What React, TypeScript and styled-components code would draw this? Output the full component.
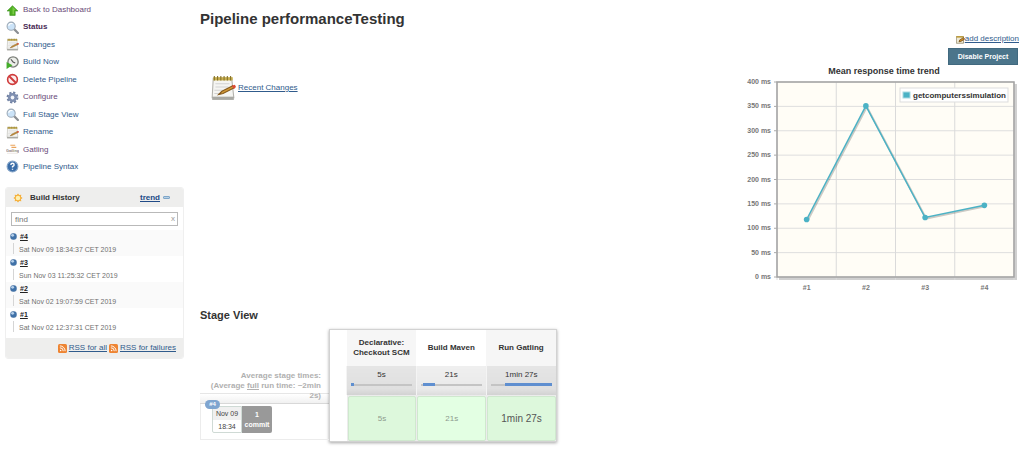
import React from "react";
import styled, { createGlobalStyle, css } from "styled-components";

const GlobalStyle = createGlobalStyle`
  * { box-sizing: border-box; }
  body {
    margin: 0;
    background: #fff;
    color: #333;
    font-family: "Liberation Sans", Arial, sans-serif;
    font-size: 8px;
    line-height: 10px;
  }
  button, input { font-family: inherit; }
  svg { display: block; flex: none; }
`;

const Page = styled.div`
  display: flex;
  align-items: flex-start;
`;

const Sidebar = styled.aside`
  flex: none;
  width: 184px;
  padding: 2px 0 0 5px;
`;

const Tasks = styled.nav`
  display: flex;
  flex-direction: column;
  justify-content: space-between;
  height: 173px;
`;

const TaskLink = styled.a<{ $visited?: boolean; $active?: boolean }>`
  display: flex;
  align-items: center;
  gap: 4px;
  height: 16px;
  padding-left: 1px;
  color: ${(p) => (p.$active ? "#4a2a55" : p.$visited ? "#694a78" : "#305b8c")};
  font-weight: ${(p) => (p.$active ? 700 : 400)};
  text-decoration: none;
`;

const History = styled.section`
  margin-top: 12px;
  border: 1px solid #efefef;
  border-radius: 3px;
  overflow: hidden;
`;

const HistoryHeader = styled.header`
  display: flex;
  align-items: center;
  height: 19px;
  padding: 0 13px 0 7px;
  background: #eeeeed;
`;

const HistoryTitle = styled.h2`
  flex: 1;
  margin: 0 0 0 7px;
  font-size: 8px;
  line-height: 10px;
`;

const TrendLink = styled.a`
  color: #204a87;
  font-weight: 700;
`;

const TrendDash = styled.span`
  width: 7px;
  height: 3px;
  margin-left: 3px;
  border: 1px solid #7ea6c9;
  border-radius: 1px;
  background: #b8d0e4;
`;

const SearchBox = styled.div`
  display: flex;
  align-items: center;
  height: 14px;
  margin: 5px 5px 4px;
  border: 1px solid #b9b9b9;
`;

const SearchInput = styled.input`
  flex: 1;
  min-width: 0;
  padding: 0 3px;
  border: 0;
  outline: 0;
  background: none;
  font-size: 8px;
  &::placeholder { color: #757575; }
`;

const ClearButton = styled.button`
  padding: 0 2px;
  border: 0;
  background: none;
  color: #999;
  font-size: 8px;
  line-height: 10px;
`;

const BuildList = styled.ol`
  margin: 0 0 4px;
  padding: 0;
  list-style: none;
`;

const BuildItem = styled.li`
  display: grid;
  grid-template-columns: 7px 1fr;
  grid-template-rows: 13px 13px;
  align-items: center;
  padding-left: 4px;
  &:nth-child(odd) { background: #fafafa; }
`;

const BuildNumber = styled.a`
  justify-self: start;
  margin-left: 3px;
  color: #222;
  font-size: 7px;
  font-weight: 700;
`;

const BuildStem = styled.span`
  justify-self: center;
  align-self: start;
  width: 1px;
  height: 11px;
  background: #d5d5d5;
`;

const BuildDate = styled.span`
  padding-left: 2px;
  color: #707070;
  font-size: 7px;
`;

const FeedBar = styled.footer`
  display: flex;
  align-items: center;
  justify-content: flex-end;
  gap: 2px;
  height: 20px;
  padding-right: 7px;
  background: #eeeeed;
`;

const TextLink = styled.a`
  color: #305b8c;
`;

const Main = styled.main`
  flex: 1;
  min-width: 0;
  padding: 9px 5px 8px 16px;
`;

const PageTitle = styled.h1`
  margin: 0 0 5px;
  font-size: 15px;
  line-height: 20px;
`;

const Overview = styled.div`
  display: flex;
  justify-content: space-between;
`;

const RecentChanges = styled.div`
  display: flex;
  align-items: center;
  align-self: flex-start;
  gap: 2px;
  padding: 41px 0 0 10px;
`;

const ProjectAside = styled.div`
  display: flex;
  flex-direction: column;
  align-items: flex-end;
`;

const DescriptionLink = styled.a`
  display: flex;
  align-items: center;
  height: 10px;
  color: #305b8c;
`;

const DisableButton = styled.button`
  width: 70px;
  height: 17px;
  margin: 4px 1px 0 0;
  padding: 0;
  border: 1px solid #41697f;
  background: #4b758b;
  color: #fff;
  font-size: 7px;
  font-weight: 700;
`;

const SectionTitle = styled.h2`
  margin: 13px 0 6px;
  font-size: 11px;
  line-height: 15px;
`;

const StageView = styled.div`
  display: flex;
  align-items: flex-start;
`;

const RunColumn = styled.div`
  width: 129px;
`;

const AverageLabel = styled.p`
  margin: 0;
  padding: 42px 8px 2px;
  border-bottom: 1px solid #d8d8d8;
  background: linear-gradient(#e6e6e6, #e6e6e6 1px, #fff 1px, #f1f1f1) bottom / 100% 10px no-repeat;
  color: #b0b0b0;
  font-weight: 700;
  text-align: right;
`;

const RunRow = styled.div`
  position: relative;
  display: flex;
  height: 36px;
  padding: 2px 0 6px 11px;
  border: solid #ececec;
  border-width: 0 0 1px 1px;
`;

const RunBadge = styled.a`
  position: absolute;
  top: -4px;
  left: 4px;
  width: 15px;
  border-radius: 5px;
  background: #7fa5d0;
  color: #fff;
  font-size: 6px;
  font-weight: 700;
  line-height: 9px;
  text-align: center;
  text-decoration: none;
`;

const runBlock = css`
  display: flex;
  flex-direction: column;
  width: 30px;
  text-align: center;
  font-size: 7px;
`;

const RunTime = styled.div`
  ${runBlock}
  border: 1px solid #cfdad5;
  border-radius: 2px 0 0 2px;
  color: #444;
  line-height: 13px;
`;

const RunDate = styled.span`
  background: #f0f0f0;
`;

const Commits = styled.div`
  ${runBlock}
  justify-content: center;
  border-radius: 0 2px 2px 0;
  background: #999;
  color: #fff;
  font-weight: 700;
`;

const StageCard = styled.div`
  padding-left: 16px;
  border: 1px solid #d2d2d2;
  box-shadow: 0 1px 3px rgba(0, 0, 0, 0.35);
  background: #fff;
`;

const StageTable = styled.table`
  border-collapse: collapse;
  table-layout: fixed;
  width: 210px;
`;

const StageHead = styled.th`
  height: 36px;
  padding: 0;
  font-size: 8px;
  &:nth-child(odd) { background: #f6f6f6; }
`;

const AverageCell = styled.td`
  height: 29px;
  padding: 4px 4px 0;
  border-left: 1px solid #f4f4f4;
  background: linear-gradient(#efefef, #e9e9e9 80%, #dcdcdc);
  vertical-align: top;
  text-align: center;
  &:nth-child(odd) { background: linear-gradient(#e5e5e5, #dfdfdf 80%, #d2d2d2); }
`;

const Track = styled.div`
  display: flex;
  align-items: center;
  width: 61px;
  height: 3px;
  margin-top: 3px;
  background: linear-gradient(#c4c4c4, #c4c4c4) center / 100% 2px no-repeat;
`;

const Fill = styled.span<{ $from: number; $size: number }>`
  width: ${(p) => p.$size}%;
  height: 3px;
  margin-left: ${(p) => p.$from}%;
  background: #5f8fd0;
`;

const ResultCell = styled.td<{ $slow?: boolean }>`
  height: 46px;
  padding: 1px 0 0 1px;
  color: ${(p) => (p.$slow ? "#555" : "#8d9a8d")};
  font-size: ${(p) => (p.$slow ? 10 : 8)}px;
  background: #ececec;
`;

const Result = styled.div<{ $light?: boolean }>`
  display: flex;
  align-items: center;
  justify-content: center;
  height: 45px;
  border: 1px solid #cfe8ce;
  border-radius: 2px;
  background: ${(p) => (p.$light ? "#e3ffe3" : "#ddf8dc")};
`;

const Icon = ({ size = 13, children }: { size?: number; children: React.ReactNode }) => (
  <svg width={size} height={size} viewBox="0 0 24 24" aria-hidden="true">
    {children}
  </svg>
);

const UpIcon = () => (
  <Icon>
    <path d="M12 3 22 13H17V21H7V13H2Z" fill="#4fae22" stroke="#2f8712" strokeWidth="1" />
    <path d="M12 5 18 11H15V19H12Z" fill="#78cb45" />
  </Icon>
);

const SearchIcon = () => (
  <Icon>
    <path d="M15 15 22 22" stroke="#8b8f94" strokeWidth="4" strokeLinecap="round" />
    <circle cx="9.500" cy="9.500" r="7.500" fill="#cbe3f8" stroke="#9fabb7" strokeWidth="2" />
    <path d="M5 9A5 5 0 0 1 12 5" stroke="#fff" strokeWidth="2" fill="none" />
  </Icon>
);

const NotepadIcon = ({ size = 13 }: { size?: number }) => (
  <Icon size={size}>
    <path d="M3 3H20L22 21H2Z" fill="#f5f5f2" stroke="#b3b2ac" strokeWidth="1" />
    <path d="M2 20H22V23H2Z" fill="#a9a9a4" />
    <path d="M3 2H21V5H3Z" fill="#c9b04f" />
    <path d="M4 1V5M7 1V5M10 1V5M13 1V5M16 1V5M19 1V5" stroke="#85712c" strokeWidth="1" />
    <path d="M5 8H18M5 11H17M4 14H12M4 17H9" stroke="#d2d2d2" strokeWidth="1" />
    <path d="M8 18 11 15 21 10 22 12 12 17Z" fill="#d39a36" stroke="#85591c" strokeWidth="1" />
    <path d="M20 10 23 9 24 11 22 13Z" fill="#dc4a34" />
  </Icon>
);

const ClockIcon = () => (
  <Icon>
    <circle cx="13" cy="11" r="9.500" fill="#eceee9" stroke="#7b7f79" strokeWidth="2.500" />
    <path d="M9 6 13 11 17 13" stroke="#555" strokeWidth="2" fill="none" />
    <path d="M1 11 12 17 1 24Z" fill="#43ad2a" />
  </Icon>
);

const StopIcon = () => (
  <Icon>
    <circle cx="12" cy="12" r="9" fill="#fbeeee" stroke="#cf3a3a" strokeWidth="3" />
    <path d="M6 6 18 18" stroke="#cf3a3a" strokeWidth="3.500" />
  </Icon>
);

const GearIcon = () => (
  <Icon>
    <circle cx="12" cy="12" r="9" fill="none" stroke="#7182a3" strokeWidth="4" strokeDasharray="4 3.069" />
    <circle cx="12" cy="12" r="6" fill="#dfe5f0" stroke="#7f8fb0" strokeWidth="5" />
    <circle cx="12" cy="12" r="3" fill="#f4f6fa" />
  </Icon>
);

const GatlingIcon = () => (
  <Icon>
    <path d="M8 3H17V5H8ZM10 7H19V9H10Z" fill="#eba55c" />
    <text x="12" y="17" textAnchor="middle" fontSize="7" fontWeight="700" fill="#8a7f78">
      Gatling
    </text>
    <path d="M2 19H22" stroke="#ddd5cc" strokeWidth="1" />
  </Icon>
);

const HelpIcon = () => (
  <Icon>
    <circle cx="12" cy="12" r="10" fill="#3a6da8" stroke="#86a5c8" strokeWidth="2" />
    <path d="M9 9Q9 6 12 6T15 9Q15 11 12 12V14M12 16V18" stroke="#fff" strokeWidth="2.500" fill="none" />
  </Icon>
);

const SunIcon = () => (
  <Icon size={10}>
    <path
      d="M12 1 15 5 20 4 19 9 23 12 19 15 20 20 15 19 12 23 9 19 4 20 5 15 1 12 5 9 4 4 9 5Z"
      fill="#f5b03c"
    />
    <circle cx="12" cy="12" r="5.500" fill="#fff0b0" />
  </Icon>
);

const BallIcon = () => (
  <Icon size={7}>
    <circle cx="12" cy="12" r="11" fill="#3f71a8" stroke="#6585a8" />
    <circle cx="9" cy="8" r="5" fill="#b4cfea" />
  </Icon>
);

const FeedIcon = () => (
  <Icon size={9}>
    <rect width="24" height="24" rx="4" fill="#ee8432" />
    <circle cx="7" cy="17" r="2" fill="#fff" />
    <path d="M5 10A9 9 0 0 1 14 19M5 5A14 14 0 0 1 19 19" fill="none" stroke="#fff" strokeWidth="2.500" />
  </Icon>
);

const EditIcon = () => (
  <Icon size={9}>
    <path d="M1 4H20V22H1Z" fill="#eee9d4" stroke="#8f8668" strokeWidth="2" />
    <path d="M1 3H20V7H1Z" fill="#bf9c37" />
    <path d="M8 18 10 13 20 7 23 11 13 17Z" fill="#d28d25" stroke="#6c4815" strokeWidth="2" />
  </Icon>
);

const tasks = [
  { label: "Back to Dashboard", icon: <UpIcon />, visited: true },
  { label: "Status", icon: <SearchIcon />, active: true },
  { label: "Changes", icon: <NotepadIcon /> },
  { label: "Build Now", icon: <ClockIcon /> },
  { label: "Delete Pipeline", icon: <StopIcon /> },
  { label: "Configure", icon: <GearIcon />, visited: true },
  { label: "Full Stage View", icon: <SearchIcon /> },
  { label: "Rename", icon: <NotepadIcon /> },
  { label: "Gatling", icon: <GatlingIcon />, visited: true },
  { label: "Pipeline Syntax", icon: <HelpIcon /> },
];

const builds = [
  { id: "#4", date: "Sat Nov 09 18:34:37 CET 2019" },
  { id: "#3", date: "Sun Nov 03 11:25:32 CET 2019" },
  { id: "#2", date: "Sat Nov 02 19:07:59 CET 2019" },
  { id: "#1", date: "Sat Nov 02 12:37:31 CET 2019" },
];

const stages = [
  { name: "Declarative: Checkout SCM", time: "5s", from: 0, size: 5 },
  { name: "Build Maven", time: "21s", from: 4, size: 19 },
  { name: "Run Gatling", time: "1min 27s", from: 23, size: 77, slow: true },
];

const responseTimes = [118, 351, 122, 147];
const plot = { left: 33, top: 17, width: 237, height: 195, max: 400 };
const yOf = (ms: number) => plot.top + plot.height * (1 - ms / plot.max);
const columnWidth = plot.width / responseTimes.length;
const points = responseTimes.map((ms, i) => ({
  x: plot.left + columnWidth * i + columnWidth / 2,
  y: yOf(ms),
}));
const line = points.map((p) => `${p.x},${p.y}`).join(" ");

const TrendChart = () => (
  <svg width="275" height="230" viewBox="0 0 275 230" role="img" aria-label="Mean response time trend">
    <text x="140" y="9" textAnchor="middle" fontSize="9" fontWeight="700" fill="#333">
      Mean response time trend
    </text>
    <rect x={plot.left + 2} y={plot.top + 2} width={plot.width + 1} height={plot.height + 1} fill="#d0d0d0" />
    <rect x={plot.left} y={plot.top} width={plot.width} height={plot.height} fill="#fffdf6" />
    {[0, 50, 100, 150, 200, 250, 300, 350, 400].map((ms) => (
      <g key={ms}>
        <path d={`M${plot.left} ${yOf(ms)}H${plot.left + plot.width}`} stroke="#dedede" />
        <path d={`M${plot.left - 3} ${yOf(ms)}H${plot.left}`} stroke="#aaa" />
        <text x="27" y={yOf(ms) + 2} textAnchor="end" fontSize="7" fontWeight="700" fill="#777">
          {ms} ms
        </text>
      </g>
    ))}
    {[0, 1, 2, 3, 4].map((i) => (
      <path
        key={i}
        d={`M${plot.left + columnWidth * i} ${plot.top}V${plot.top + plot.height + 3}`}
        stroke="#dadada"
      />
    ))}
    <rect
      x={plot.left}
      y={plot.top}
      width={plot.width}
      height={plot.height}
      fill="none"
      stroke="#a2a2a2"
      strokeWidth="1.500"
    />
    {points.map((p, i) => (
      <text key={i} x={p.x} y="225" textAnchor="middle" fontSize="7" fontWeight="700" fill="#777">
        #{i + 1}
      </text>
    ))}
    <polyline points={line} transform="translate(1 1)" fill="none" stroke="#000" strokeOpacity="0.200" strokeWidth="2" />
    <polyline points={line} fill="none" stroke="#4bb2c5" strokeWidth="1.500" />
    {points.map((p, i) => (
      <circle key={i} cx={p.x} cy={p.y} r="2.800" fill="#4bb2c5" />
    ))}
    <rect x="156" y="23" width="108" height="14" fill="#fff" stroke="#ddd" />
    <rect x="159" y="27" width="7" height="6" fill="#4bb2c5" stroke="#a9d9e2" />
    <text x="169" y="33" fontSize="8" fontWeight="700" fill="#333">
      getcomputerssimulation
    </text>
  </svg>
);

export default function App() {
  return (
    <>
      <GlobalStyle />
      <Page>
        <Sidebar>
          <Tasks>
            {tasks.map((t) => (
              <TaskLink key={t.label} href="#" $visited={t.visited} $active={t.active}>
                {t.icon}
                {t.label}
              </TaskLink>
            ))}
          </Tasks>
          <History>
            <HistoryHeader>
              <SunIcon />
              <HistoryTitle>Build History</HistoryTitle>
              <TrendLink href="#">trend</TrendLink>
              <TrendDash />
            </HistoryHeader>
            <SearchBox>
              <SearchInput type="text" placeholder="find" aria-label="Find builds" />
              <ClearButton type="button" aria-label="Clear">
                x
              </ClearButton>
            </SearchBox>
            <BuildList>
              {builds.map((b) => (
                <BuildItem key={b.id}>
                  <BallIcon />
                  <BuildNumber href="#">{b.id}</BuildNumber>
                  <BuildStem />
                  <BuildDate>{b.date}</BuildDate>
                </BuildItem>
              ))}
            </BuildList>
            <FeedBar>
              <FeedIcon />
              <TextLink href="#">RSS for all</TextLink>
              <FeedIcon />
              <TextLink href="#">RSS for failures</TextLink>
            </FeedBar>
          </History>
        </Sidebar>
        <Main>
          <PageTitle>Pipeline performanceTesting</PageTitle>
          <Overview>
            <RecentChanges>
              <NotepadIcon size={26} />
              <TextLink href="#">Recent Changes</TextLink>
            </RecentChanges>
            <ProjectAside>
              <DescriptionLink href="#">
                <EditIcon />
                add description
              </DescriptionLink>
              <DisableButton type="button">Disable Project</DisableButton>
              <TrendChart />
            </ProjectAside>
          </Overview>
          <SectionTitle>Stage View</SectionTitle>
          <StageView>
            <RunColumn>
              <AverageLabel>
                Average stage times:
                <br />
                (Average <u>full</u> run time: ~2min 2s)
              </AverageLabel>
              <RunRow>
                <RunBadge href="#">#4</RunBadge>
                <RunTime>
                  <RunDate>Nov 09</RunDate>
                  <span>18:34</span>
                </RunTime>
                <Commits>
                  <span>1</span>
                  <span>commit</span>
                </Commits>
              </RunRow>
            </RunColumn>
            <StageCard>
              <StageTable>
                <thead>
                  <tr>
                    {stages.map((s) => (
                      <StageHead key={s.name} scope="col">
                        {s.name}
                      </StageHead>
                    ))}
                  </tr>
                </thead>
                <tbody>
                  <tr>
                    {stages.map((s) => (
                      <AverageCell key={s.name}>
                        {s.time}
                        <Track>
                          <Fill $from={s.from} $size={s.size} />
                        </Track>
                      </AverageCell>
                    ))}
                  </tr>
                  <tr>
                    {stages.map((s, i) => (
                      <ResultCell key={s.name} $slow={s.slow}>
                        <Result $light={i === 1}>{s.time}</Result>
                      </ResultCell>
                    ))}
                  </tr>
                </tbody>
              </StageTable>
            </StageCard>
          </StageView>
        </Main>
      </Page>
    </>
  );
}
